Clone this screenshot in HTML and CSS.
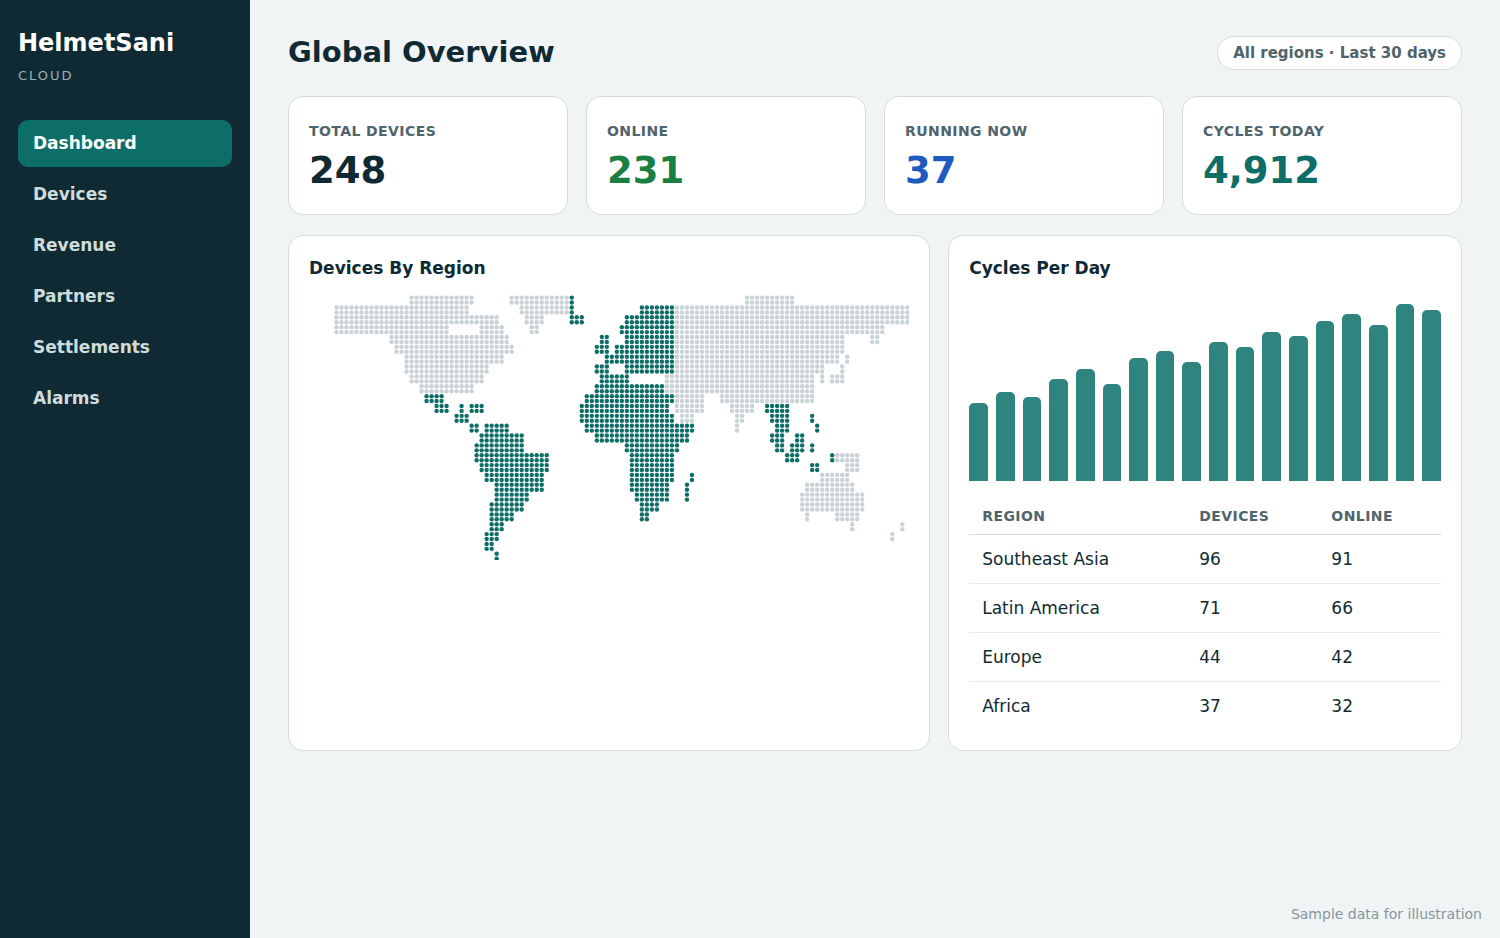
FILE: index.html
```html
<!DOCTYPE html>
<html lang="en">
<head>
<meta charset="utf-8">
<meta name="viewport" content="width=device-width, initial-scale=1">
<title>HelmetSani Cloud</title>
<link rel="stylesheet" href="styles.css">
</head>
<body>
<div class="app">
  <aside class="sidebar">
    <div class="brand">HelmetSani</div>
    <div class="brand-sub">CLOUD</div>
    <nav class="nav">
      <a class="nav-link active" href="#dashboard" aria-current="page">Dashboard</a>
      <a class="nav-link" href="#devices">Devices</a>
      <a class="nav-link" href="#revenue">Revenue</a>
      <a class="nav-link" href="#partners">Partners</a>
      <a class="nav-link" href="#settlements">Settlements</a>
      <a class="nav-link" href="#alarms">Alarms</a>
    </nav>
  </aside>
  <main class="main">
    <header class="topbar">
      <h1 class="title">Global Overview</h1>
      <button class="pill" type="button">All regions · Last 30 days</button>
    </header>
    <section class="stats">
      <div class="card"><div class="label">TOTAL DEVICES</div><div class="value">248</div></div>
      <div class="card"><div class="label">ONLINE</div><div class="value green">231</div></div>
      <div class="card"><div class="label">RUNNING NOW</div><div class="value blue">37</div></div>
      <div class="card"><div class="label">CYCLES TODAY</div><div class="value teal">4,912</div></div>
    </section>
    <section class="panels">
      <div class="card">
        <h2 class="panel-title">Devices By Region</h2>
        <svg class="map" id="map" viewBox="0 0 600 265" role="img" aria-label="Dotted world map of device regions"></svg>
      </div>
      <div class="card">
        <h2 class="panel-title">Cycles Per Day</h2>
        <div class="chart" id="chart"></div>
        <table class="table">
          <thead><tr><th class="col-region">REGION</th><th class="col-devices">DEVICES</th><th>ONLINE</th></tr></thead>
          <tbody>
            <tr><td>Southeast Asia</td><td>96</td><td>91</td></tr>
            <tr><td>Latin America</td><td>71</td><td>66</td></tr>
            <tr><td>Europe</td><td>44</td><td>42</td></tr>
            <tr><td>Africa</td><td>37</td><td>32</td></tr>
          </tbody>
        </table>
      </div>
    </section>
    <footer class="note">Sample data for illustration</footer>
  </main>
</div>
<script src="app.js"></script>
</body>
</html>
```
FILE: styles.css
```css
* { box-sizing: border-box; }
body {
  margin: 0;
  background: #f0f4f5;
  color: #0f2a33;
  font-family: "DejaVu Sans", sans-serif;
}
.app { display: flex; min-height: 100vh; }
.sidebar {
  flex: 0 0 250px;
  padding: 28px 18px;
  background: #0f2a33;
  color: #fff;
}
.brand { font-size: 24px; line-height: 30px; font-weight: 700; }
.brand-sub {
  margin-top: 9px;
  font-size: 13px;
  line-height: 18px;
  letter-spacing: 2px;
  color: #9fb0b5;
}
.nav { display: flex; flex-direction: column; gap: 4px; margin-top: 35px; }
.nav-link {
  padding: 12px 15px;
  border-radius: 10px;
  font-size: 17px;
  line-height: 23px;
  font-weight: 600;
  color: #cfdcdc;
  text-decoration: none;
}
.nav-link.active { background: #0d6e68; color: #fff; }
.main {
  flex: 1;
  min-width: 0;
  display: flex;
  flex-direction: column;
  padding: 33px 38px 14px;
}
.topbar { display: flex; align-items: center; justify-content: space-between; margin-bottom: 26px; }
.title { margin: 0; font-size: 29px; line-height: 36px; font-weight: 700; }
.pill {
  margin-top: 3px;
  padding: 6px 15px;
  border: 1px solid #d3dde0;
  border-radius: 17px;
  background: #fff;
  color: #4f646c;
  font: 600 15px/20px "DejaVu Sans", sans-serif;
}
.card {
  min-width: 0;
  padding: 20px;
  border: 1px solid #d3dde0;
  border-radius: 15px;
  background: #fff;
}
.stats { display: grid; grid-template-columns: repeat(4, 1fr); gap: 18px; margin-bottom: 20px; }
.label {
  margin-top: 5px;
  font-size: 14px;
  line-height: 18px;
  font-weight: 600;
  letter-spacing: 0.03em;
  color: #4f646c;
}
.value { margin-top: 8px; font-size: 37px; line-height: 46px; font-weight: 700; }
.green { color: #1a7f43; }
.blue { color: #1d5bbf; }
.teal { color: #0d6e68; }
.panels { display: grid; grid-template-columns: 5fr 4fr; gap: 18px; }
.panel-title { margin: 0 0 15px; font-size: 17px; line-height: 24px; font-weight: 700; }
.map { display: block; width: 100%; }
.dot { fill: #c9d3d7; }
.dot-active { fill: #0d6e68; }
.chart { display: flex; align-items: flex-end; gap: 8px; height: 186px; }
.bar { flex: 1; border-radius: 5px 5px 0 0; background: #2f847f; }
.table { width: 100%; margin-top: 16px; border-collapse: collapse; table-layout: fixed; }
.table th, .table td { padding: 12px 13px; text-align: left; font-size: 17px; line-height: 24px; font-weight: 400; border-bottom: 1px solid #e8eced; }
.table th { padding: 10px 13px 9px; font-size: 14px; line-height: 18px; font-weight: 600; letter-spacing: 0.03em; color: #4f646c; border-bottom-color: #d3dde0; }
.table tr:last-child td { border-bottom: 0; }
.table .col-region { width: 46%; }
.table .col-devices { width: 28%; }
.note { margin: auto -20px 0 0; text-align: right; font-size: 14px; line-height: 20px; color: #8497a0; }
```
FILE: app.js
```js
// Runs of columns per latitude band: [idle regions, active regions].
const bands = [
  ["15-27 35-46 82-91", "47"],
  ["0-26 37-46 68-114", "47 61-67"],
  ["0-32 38-41 68-114", "47-49 58-67"],
  ["0-22 29-33 39-40 68-109", "57-67"],
  ["11-34 68-101 107-108", "53-54 58-67"],
  ["12-35 68-101", "52-54 56-67"],
  ["14-33 68-100 102", "54-67"],
  ["14-30 68-97 101", "52-54 58-67"],
  ["15-29 66-95 97 99-101", "53-58"],
  ["17-27 66-95", "52-65"],
  ["68-73 77-95", "18-21 50-67"],
  ["68-73 79-83", "20-22 25 27-29 49-66 86-90"],
  ["69-71 80-81", "24-26 49-67 87-90 95"],
  ["80", "27-28 30-34 50-71 88-90 96"],
  ["", "29-37 52-70 87-89 92-93"],
  ["", "28-37 58-68 88-89 91-93 95"],
  ["100-104", "28-42 59-67 90-92 99"],
  ["102-104", "29-42 59-67 95-96"],
  ["97-102", "30-41 59-67 71"],
  ["94-103", "32-41 59-66 70"],
  ["93-105", "32-38 60-66 70"],
  ["93-105", "31-37 61-64"],
  ["94 100-104", "31-35 61-62"],
  ["103 113", "31-33"],
  ["111", "30-32"],
  ["", "30-31"],
  ["", "32"]
];
const map = document.getElementById("map");
const addDots = (runs, row, cls) => {
  for (const run of runs.split(" ").filter(Boolean)) {
    const [from, to = from] = run.split("-").map(Number);
    for (let col = from; col <= to; col++) {
      const dot = document.createElementNS("http://www.w3.org/2000/svg", "circle");
      dot.setAttribute("cx", 27.4 + col * 5.006);
      dot.setAttribute("cy", 2.6 + row * 4.925);
      dot.setAttribute("r", 2.2);
      dot.setAttribute("class", cls);
      map.appendChild(dot);
    }
  }
};
bands.forEach(([idle, active], band) => {
  for (const row of [band * 2, band * 2 + 1]) {
    addDots(idle, row, "dot");
    addDots(active, row, "dot-active");
  }
});

const cycles = [42, 48, 45, 55, 60, 52, 66, 70, 64, 75, 72, 80, 78, 86, 90, 84, 95, 92];
const chart = document.getElementById("chart");
for (const value of cycles) {
  const bar = document.createElement("div");
  bar.className = "bar";
  bar.style.height = value + "%";
  chart.appendChild(bar);
}
```
